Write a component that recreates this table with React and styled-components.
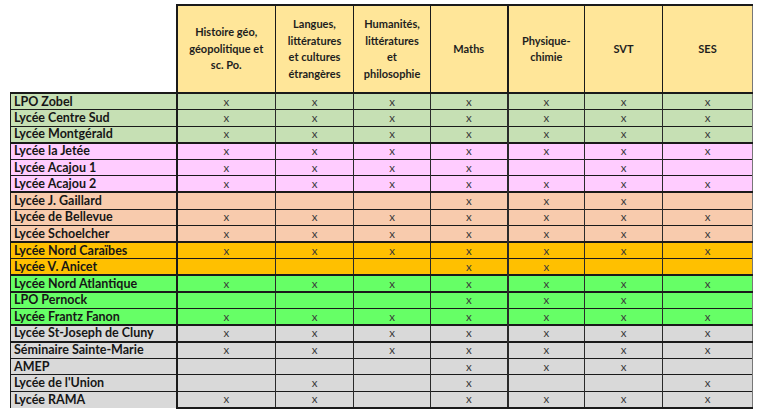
import React from "react";
import styled, { createGlobalStyle } from "styled-components";

const Global = createGlobalStyle`
  html, body { margin: 0; padding: 0; background: #ffffff; }
  body { font-family: Lato, "Open Sans", "Liberation Sans", sans-serif; }
`;

const Page = styled.div`
  width: 768px;
  height: 417px;
  padding: 4px 0 0 10px;
  box-sizing: border-box;
  overflow: hidden;
  background: #fff;
`;

const Table = styled.table`
  border-collapse: collapse;
  table-layout: fixed;
  width: 742px;
  font-family: Lato, "Open Sans", "Liberation Sans", sans-serif;
`;

const Corner = styled.th`
  border: none;
  background: #fff;
  padding: 0;
`;

const HeadCell = styled.th`
  background: #ffe699;
  border-top: 2px solid #1a1a1a;
  border-bottom: 2px solid #1a1a1a;
  border-left: ${(p) => (p.$thick ? "2px" : "1px")} solid #1a1a1a;
  border-right: ${(p) => (p.$last ? "1px solid #777" : "1px solid #1a1a1a")};
  height: 86px;
  padding: 0 2px;
  font-size: 11px;
  font-weight: 700;
  line-height: 16.5px;
  color: #1e1e1e;
  text-align: center;
  vertical-align: middle;
`;

const Row = styled.tr`
  height: 16.58px;
  background: ${(p) => p.$bg};
`;

const NameCell = styled.td`
  border-left: 1.5px solid #1a1a1a;
  border-right: 2px solid #1a1a1a;
  border-top: ${(p) => (p.$thickTop ? "2px" : "1px")} solid #1a1a1a;
  padding: 0 0 0 3px;
  font-size: 12.5px;
  font-weight: 700;
  color: #161616;
  white-space: nowrap;
  line-height: 12px;
  height: 14px;
  overflow: hidden;
`;

const MarkCell = styled.td`
  border-top: ${(p) => (p.$thickTop ? "2px" : "1px")} solid #1a1a1a;
  border-left: ${(p) => (p.$thick ? "2px" : "1px")} solid #2a2a2a;
  border-right: ${(p) => (p.$last ? "1px solid #777" : "1px solid #2a2a2a")};
  border-bottom: ${(p) => (p.$bottom ? "2px solid #1a1a1a" : "none")};
  text-align: center;
  padding: 0;
  font-size: 11.5px;
  font-weight: 400;
  color: #3a3a3a;
  line-height: 12px;
  height: 14px;
`;

const headers = [
  { label: ["Histoire géo,", "géopolitique et", "sc. Po."] },
  { label: ["Langues,", "littératures", "et cultures", "étrangères"] },
  { label: ["Humanités,", "littératures", "et", "philosophie"] },
  { label: ["Maths"] },
  { label: ["Physique-", "chimie"], thick: true },
  { label: ["SVT"] },
  { label: ["SES"], last: true },
];

const widths = [166, 99, 78, 77, 77, 77, 78, 90];

const GREEN = "#c6e0b4";
const PINK = "#ffccff";
const PEACH = "#f8cbad";
const ORANGE = "#ffc000";
const LIME = "#66ff66";
const GRAY = "#d9d9d9";

const ALL = "1111111";
const rows = [
  { name: "LPO Zobel", bg: GREEN, m: ALL },
  { name: "Lycée Centre Sud", bg: GREEN, m: ALL },
  { name: "Lycée Montgérald", bg: GREEN, m: ALL },
  { name: "Lycée la Jetée", bg: PINK, m: ALL, thick: true },
  { name: "Lycée Acajou 1", bg: PINK, m: "1111010" },
  { name: "Lycée Acajou 2", bg: PINK, m: ALL },
  { name: "Lycée J. Gaillard", bg: PEACH, m: "0001110", thick: true },
  { name: "Lycée de Bellevue", bg: PEACH, m: ALL },
  { name: "Lycée Schoelcher", bg: PEACH, m: ALL },
  { name: "Lycée Nord Caraïbes", bg: ORANGE, m: ALL, thick: true },
  { name: "Lycée V. Anicet", bg: ORANGE, m: "0001100" },
  { name: "Lycée Nord Atlantique", bg: LIME, m: ALL, thick: true },
  { name: "LPO Pernock", bg: LIME, m: "0001110", thick: true },
  { name: "Lycée Frantz Fanon", bg: LIME, m: ALL },
  { name: "Lycée St-Joseph de Cluny", bg: GRAY, m: ALL, thick: true },
  { name: "Séminaire Sainte-Marie", bg: GRAY, m: ALL, thick: true },
  { name: "AMEP", bg: GRAY, m: "0001110" },
  { name: "Lycée de l'Union", bg: GRAY, m: "0101001" },
  { name: "Lycée RAMA", bg: GRAY, m: "1101111" },
];

export default function App() {
  return (
    <>
      <Global />
      <Page>
        <Table>
          <colgroup>
            {widths.map((w, i) => (
              <col key={i} style={{ width: w }} />
            ))}
          </colgroup>
          <thead>
            <tr>
              <Corner />
              {headers.map((h, i) => (
                <HeadCell key={i} $thick={i === 0 || h.thick} $last={h.last}>
                  {h.label.map((l, j) => (
                    <React.Fragment key={j}>
                      {j > 0 && <br />}
                      {l}
                    </React.Fragment>
                  ))}
                </HeadCell>
              ))}
            </tr>
          </thead>
          <tbody>
            {rows.map((r, ri) => (
              <Row key={ri} $bg={r.bg}>
                <NameCell $thickTop={ri === 0 || r.thick}>{r.name}</NameCell>
                {r.m.split("").map((c, ci) => (
                  <MarkCell
                    key={ci}
                    $thickTop={ri === 0 || r.thick}
                    $thick={ci === 0 || ci === 4}
                    $last={ci === 6}
                    $bottom={ri === rows.length - 1}
                  >
                    {c === "1" ? "x" : ""}
                  </MarkCell>
                ))}
              </Row>
            ))}
          </tbody>
        </Table>
      </Page>
    </>
  );
}
